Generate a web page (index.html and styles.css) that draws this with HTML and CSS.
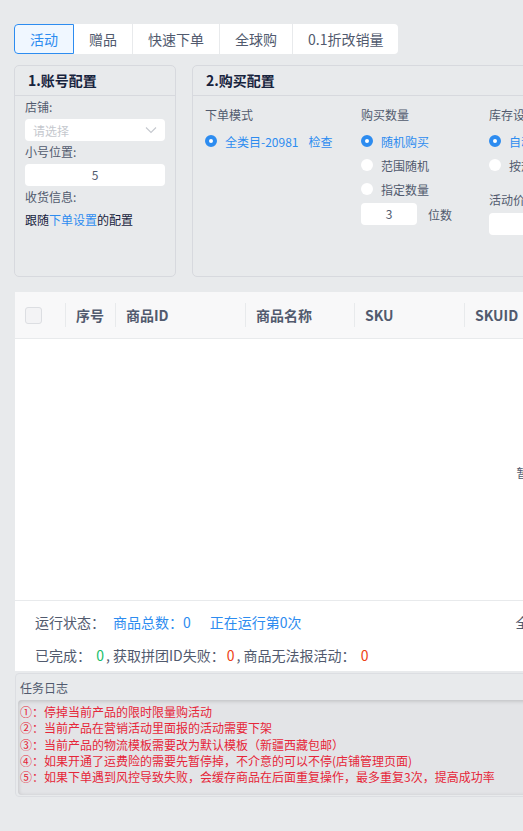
FILE: index.html
```html
<html>
    <head>
        <link rel="stylesheet" href="styles.css">
    </head>
    <body>
        <div class="page">
            <div class="tabs">
                <div class="tab active">活动</div>
                <div class="tab">赠品</div>
                <div class="tab">快速下单</div>
                <div class="tab">全球购</div>
                <div class="tab">0.1折改销量</div>
            </div>

            <div class="configs">
                <div class="card account">
                    <div class="card-title">1.账号配置</div>
                    <div class="card-body">
                        <div class="label">店铺:</div>
                        <div class="select">
                            <span class="placeholder">请选择</span>
                            <svg width="12" height="8" viewBox="0 0 12 8"><path d="M1 1.5l5 5 5-5" fill="none" stroke="#c5c8ce" stroke-width="1.1"/></svg>
                        </div>
                        <div class="label">小号位置:</div>
                        <div class="input center">5</div>
                        <div class="label">收货信息:</div>
                        <div class="follow">跟随<span class="link">下单设置</span>的配置</div>
                    </div>
                </div>

                <div class="card buy">
                    <div class="card-title">2.购买配置</div>
                    <div class="card-body cols">
                        <div class="col mode">
                            <div class="label">下单模式</div>
                            <div class="radio checked"><i></i>全类目-20981<span class="check">检查</span></div>
                        </div>
                        <div class="col qty">
                            <div class="label">购买数量</div>
                            <div class="radio checked"><i></i>随机购买</div>
                            <div class="radio"><i></i>范围随机</div>
                            <div class="radio"><i></i>指定数量</div>
                            <div class="inline">
                                <div class="input center small">3</div>
                                <span>位数</span>
                            </div>
                        </div>
                        <div class="col stock">
                            <div class="label">库存设置</div>
                            <div class="radio checked"><i></i>自动设置库存</div>
                            <div class="radio"><i></i>按规格设置库存</div>
                            <div class="label price-label">活动价格</div>
                            <div class="input wide"></div>
                        </div>
                    </div>
                </div>
            </div>

            <div class="table-wrap">
                <div class="thead">
                    <div class="th c-check"><span class="checkbox"></span></div>
                    <div class="th c-no">序号</div>
                    <div class="th c-id">商品ID</div>
                    <div class="th c-name">商品名称</div>
                    <div class="th c-sku">SKU</div>
                    <div class="th c-skuid">SKUID</div>
                </div>
                <div class="tbody">
                    <span class="empty">暂无数据</span>
                </div>
                <div class="status">
                    <div class="status-row">
                        <span>运行状态：</span>
                        <span class="blue">商品总数：0</span>
                        <span class="blue">正在运行第0次</span>
                        <span class="right">全部完成</span>
                    </div>
                    <div class="status-row">
                        <span>已完成： <b class="green">0</b>, 获取拼团ID失败：<b class="red">0</b>, 商品无法报活动： <b class="red">0</b></span>
                    </div>
                </div>
            </div>

            <div class="log">
                <div class="log-title">任务日志</div>
                <div class="log-box">
                    <div>①：停掉当前产品的限时限量购活动</div>
                    <div>②：当前产品在营销活动里面报的活动需要下架</div>
                    <div>③：当前产品的物流模板需要改为默认模板（新疆西藏包邮）</div>
                    <div>④：如果开通了运费险的需要先暂停掉，不介意的可以不停(店铺管理页面)</div>
                    <div>⑤：如果下单遇到风控导致失败，会缓存商品在后面重复操作，最多重复3次，提高成功率</div>
                </div>
            </div>
        </div>
    </body>
</html>
```

FILE: styles.css
```css
html, body {
    margin: 0;
    overflow: hidden;
}
body {
    background: #e8eaec;
    color: #515a6e;
    font-family: "Noto Sans CJK SC", "Open Sans", sans-serif;
    font-size: 12px;
}
.page {
    width: 1052px;
    padding: 24px 0 0 14px;
}

/* tabs */
.tabs {
    display: inline-flex;
    height: 30px;
    background: white;
    border-radius: 4px;
    box-sizing: border-box;
}
.tab {
    padding: 0 15px;
    line-height: 30px;
    font-size: 14px;
    border-right: 1px solid #e8eaec;
    color: #515a6e;
}
.tab:last-child {
    border-right: none;
}
.tab.active {
    color: #2d8cf0;
    background: #f0f7ff;
    border: 1px solid #2d8cf0;
    border-radius: 4px 0 0 4px;
    line-height: 28px;
}

/* config cards */
.configs {
    display: flex;
    gap: 16px;
    margin-top: 11px;
}
.card {
    height: 212px;
    border: 1px solid #d7d9de;
    border-radius: 5px;
    box-sizing: border-box;
}
.account {
    width: 162px;
    flex-shrink: 0;
}
.buy {
    flex: 1;
}
.card-title {
    height: 29px;
    line-height: 29px;
    padding-left: 13px;
    font-size: 14px;
    font-weight: bold;
    color: #17233d;
    border-bottom: 1px solid #d7d9de;
}
.account .card-body {
    padding: 1px 10px 0 10px;
}
.label {
    line-height: 20px;
}
.select, .input {
    height: 22px;
    background: white;
    border-radius: 4px;
    box-sizing: border-box;
    color: #515a6e;
}
.select {
    display: flex;
    align-items: center;
    justify-content: space-between;
    padding: 0 8px;
    margin: 2px 0 1px;
}
.placeholder {
    color: #c5c8ce;
}
.input {
    margin: 2px 0 1px;
}
.center {
    text-align: center;
    line-height: 22px;
}
.follow {
    margin-top: 3px;
    line-height: 20px;
    color: #17233d;
}
.link {
    color: #2d8cf0;
}

.cols {
    display: flex;
    padding: 9px 0 0 12px;
}
.col .label {
    margin-bottom: 4px;
}
.mode {
    width: 156px;
}
.qty {
    width: 128px;
}
.stock {
    width: 200px;
}
.radio {
    display: flex;
    align-items: center;
    height: 24px;
    color: #515a6e;
}
.radio i {
    width: 12px;
    height: 12px;
    border-radius: 50%;
    background: white;
    margin-right: 8px;
    box-sizing: border-box;
}
.radio.checked {
    color: #2d8cf0;
}
.radio.checked i {
    border: 4px solid #2d8cf0;
}
.check {
    margin-left: 10px;
}
.inline {
    display: flex;
    align-items: center;
    gap: 11px;
    margin-top: 2px;
}
.input.small {
    width: 56px;
    margin: 0;
}
.price-label {
    margin-top: 13px;
}
.input.wide {
    width: 160px;
    margin-top: -1px;
}

/* table */
.table-wrap {
    margin: 14px 0 0 1px;
    background: white;
    border-top: 1px solid #e8eaec;
}
.thead {
    display: flex;
    height: 46px;
    align-items: center;
    background: #f8f8f9;
    border-bottom: 1px solid #e8eaec;
}
.th {
    height: 24px;
    line-height: 24px;
    font-size: 14px;
    font-weight: bold;
    color: #515a6e;
    padding-left: 10px;
    border-left: 1px solid #e8eaec;
    box-sizing: border-box;
}
.c-check {
    width: 50px;
    border-left: none;
    display: flex;
    align-items: center;
}
.checkbox {
    width: 15px;
    height: 15px;
    border: 1px solid #dcdee2;
    border-radius: 3px;
    background: #f3f3f5;
}
.c-no { width: 50px; }
.c-id { width: 130px; }
.c-name { width: 109px; }
.c-sku { width: 110px; }
.c-skuid { width: 120px; }
.tbody {
    height: 261px;
    display: flex;
    align-items: center;
    justify-content: center;
    border-bottom: 1px solid #e8eaec;
}
.empty {
    color: #515a6e;
    margin-top: 5px;
}
.status {
    padding: 4px 0 0 20px;
    font-size: 14px;
    color: #515a6e;
}
.status-row {
    display: flex;
    height: 33px;
    align-items: center;
}
.status-row .blue {
    color: #2d8cf0;
    margin-left: 8px;
}
.status-row .blue + .blue {
    margin-left: 19px;
}
.status-row .right {
    margin-left: 214px;
}
.status-row b {
    font-weight: normal;
    margin: 0 2px;
}
.green {
    color: #19be6b;
}
.red {
    color: #ed4014;
}

/* log */
.log {
    margin: 2px 0 0 1px;
    height: 124px;
    border: 1px solid #dcdee2;
    border-radius: 4px;
    box-sizing: border-box;
    padding: 0 2px;
}
.log-title {
    height: 26px;
    line-height: 28px;
    padding-left: 2px;
    color: #515a6e;
}
.log-box {
    height: 95px;
    background: #e3e4e7;
    border-radius: 4px;
    box-shadow: inset 0 1px 4px rgba(0, 0, 0, 0.18);
    padding: 4px 0 0 2px;
    box-sizing: border-box;
    color: #e62639;
    line-height: 16.3px;
}
```
